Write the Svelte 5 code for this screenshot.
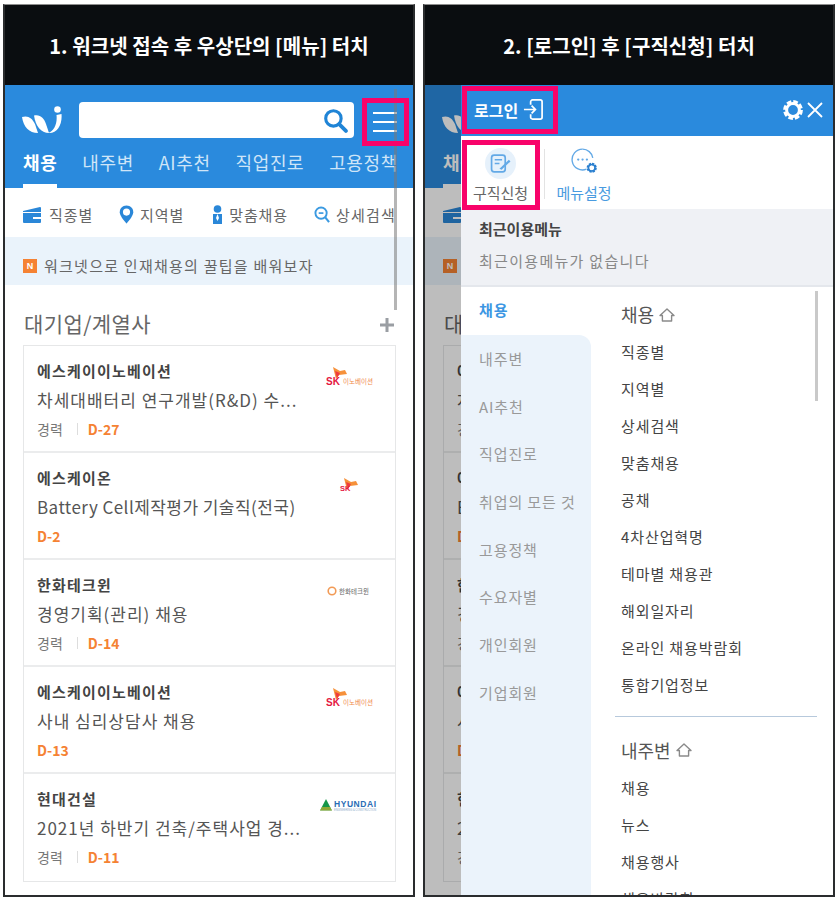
<script>
  const tabs = ['채용', '내주변', 'AI추천', '직업진로', '고용정책'];
  const jobs = [
    { co: '에스케이이노베이션', title: '차세대배터리 연구개발(R&D) 수...', career: true, d: 'D-27', logo: 'ski' },
    { co: '에스케이온', title: 'Battery Cell제작평가 기술직(전국)', career: false, d: 'D-2', logo: 'sk', tight: true },
    { co: '한화테크윈', title: '경영기획(관리) 채용', career: true, d: 'D-14', logo: 'hanwha' },
    { co: '에스케이이노베이션', title: '사내 심리상담사 채용', career: false, d: 'D-13', logo: 'ski' },
    { co: '현대건설', title: '2021년 하반기 건축/주택사업 경...', career: true, d: 'D-11', logo: 'hyundai' }
  ];
  const side = ['내주변', 'AI추천', '직업진로', '취업의 모든 것', '고용정책', '수요자별', '개인회원', '기업회원'];
  const menuA = ['직종별', '지역별', '상세검색', '맞춤채용', '공채', '4차산업혁명', '테마별 채용관', '해외일자리', '온라인 채용박람회', '통합기업정보'];
  const menuB = ['채용', '뉴스', '채용행사', '채용박람회'];
</script>

{#snippet wings(x, y)}
  <path d="M{x} {y} l7 4 l5 -1 l2 4 l-8 1 l-3 4 z" fill="#f6913a" />
  <path d="M{x + 2} {y + 4} l5 2 l-3 5 z" fill="#ee3b3f" />
{/snippet}

{#snippet home()}
  <svg class="home" viewBox="0 0 16 16" width="16" height="16" aria-hidden="true">
    <path d="M8 2 L15 8.5 H12.6 V14 H3.4 V8.5 H1 Z" fill="none" stroke="#8a8a8a" stroke-width="1.4" stroke-linejoin="round" />
  </svg>
{/snippet}

{#snippet page()}
  <div class="blue">
    <div class="top">
      <svg class="logo" viewBox="0 0 40 28" width="40" height="28" aria-hidden="true">
        <path d="M0 11 C6 9 10 12 13 18 L16 27 C7 27 1.5 21 0 11Z" fill="#fff" />
        <path d="M12 9.5 C18 8 22 12 24 18 L27 27 C19 27 13.5 20 12 9.5Z" fill="#fff" />
        <path d="M26 27 C32 25 35.5 18 34.5 9 L39.5 8 C40.5 19 35 28 26 27Z" fill="#fff" />
        <circle cx="35.5" cy="3.5" r="3.3" fill="#fff" />
      </svg>
      <div class="search">
        <svg viewBox="0 0 24 24" width="25" height="25" aria-hidden="true">
          <circle cx="10" cy="10" r="7.4" fill="none" stroke="#1f84d6" stroke-width="3" />
          <path d="M15.5 15.5 L22 22" stroke="#1f84d6" stroke-width="3.6" stroke-linecap="round" />
        </svg>
      </div>
      <div class="burger"><i></i><i></i><i></i></div>
    </div>
    <nav class="tabs">
      {#each tabs as t, i}
        <span class:on={i === 0}>{t}</span>
      {/each}
    </nav>
  </div>

  <div class="sub">
    <span class="it i1">
      <svg viewBox="0 0 20 18" width="20" height="18" aria-hidden="true">
        <path d="M1 5 L18 1 a1 1 0 0 1 1 1 V16 a1 1 0 0 1 -1 1 H2 a1 1 0 0 1 -1 -1Z" fill="#2a87d8" />
        <path d="M1 6.5 H19" stroke="#fff" stroke-width="1" />
        <rect x="11" y="11" width="8" height="2" fill="#fff" />
      </svg>직종별
    </span>
    <span class="it i2">
      <svg viewBox="0 0 16 20" width="15" height="19" aria-hidden="true">
        <path d="M8 0.5 C3.5 0.5 0.8 3.8 0.8 7.5 C0.8 12 8 19.5 8 19.5 S15.2 12 15.2 7.5 C15.2 3.8 12.5 0.5 8 0.5Z" fill="#2a87d8" />
        <circle cx="8" cy="7.4" r="3.8" fill="#fff" />
      </svg>지역별
    </span>
    <span class="it i3">
      <svg viewBox="0 0 11 19" width="11" height="19" aria-hidden="true">
        <circle cx="5.5" cy="4" r="3.8" fill="#2a87d8" />
        <path d="M1 9 H10 V19 H1Z" fill="#2a87d8" />
        <path d="M5.5 9 L7 13 L5.5 16 L4 13Z" fill="#fff" />
      </svg>맞춤채용
    </span>
    <span class="it i4">
      <svg viewBox="0 0 17 18" width="16" height="17" aria-hidden="true">
        <circle cx="7.5" cy="7.5" r="6" fill="none" stroke="#3b9ae1" stroke-width="2" />
        <path d="M5 7.5 H10" stroke="#3b9ae1" stroke-width="1.8" />
        <path d="M12 12 L16 17" stroke="#3b9ae1" stroke-width="2.2" />
      </svg>상세검색
    </span>
  </div>

  <div class="notice"><b>N</b>워크넷으로 인재채용의 꿀팁을 배워보자</div>

  <div class="sec">
    <h2>대기업/계열사</h2>
    <svg viewBox="0 0 14 14" width="14" height="14" aria-hidden="true"><path d="M7 0 V14 M0 7 H14" stroke="#9a9ea3" stroke-width="3" /></svg>
  </div>

  <ul class="jobs">
    {#each jobs as j}
      <li>
        <div class="job-text">
          <strong>{j.co}</strong>
          <p class:tight={j.tight}>{j.title}</p>
          <div class="meta">
            {#if j.career}<span class="car">경력</span>{/if}
            <em>{j.d}</em>
          </div>
        </div>
        <div class="co-logo">
          {#if j.logo === 'ski'}
            <svg viewBox="0 0 52 20" width="52" height="20" aria-hidden="true">
              {@render wings(10, 0)}
              <text x="3" y="18" class="sk">SK</text>
              <text x="20" y="17" class="ski">이노베이션</text>
            </svg>
          {:else if j.logo === 'sk'}
            <svg class="l-sk" viewBox="0 0 20 18" width="20" height="18" aria-hidden="true">
              {@render wings(5, 0)}
              <text x="1" y="13" class="sk small">SK</text>
            </svg>
          {:else if j.logo === 'hanwha'}
            <svg class="l-hw" viewBox="0 0 44 12" width="44" height="12" aria-hidden="true">
              <circle cx="5" cy="6" r="3.8" fill="none" stroke="#f29a55" stroke-width="1.6" />
              <text x="12" y="9" class="hw">한화테크윈</text>
            </svg>
          {:else}
            <svg class="l-hy" viewBox="0 0 58 14" width="58" height="14" aria-hidden="true">
              <path d="M0 12.5 L6 1 L12 12.5Z" fill="#16964a" />
              <path d="M0 12.5 L2 9 H10 L12 12.5Z" fill="#e3b62c" opacity=".6" />
              <text x="14" y="8.8" class="hy">HYUNDAI</text>
              <text x="14" y="12.6" class="hy2">ENGINEERING &amp; CONSTRUCTION</text>
            </svg>
          {/if}
        </div>
      </li>
    {/each}
  </ul>
{/snippet}

<main class="shot">
  <section class="panel">
    <header class="cap">1. 워크넷 접속 후 우상단의 [메뉴] 터치</header>
    <div class="body">
      {@render page()}
      <span class="scroll"></span>
      <span class="hl hl-menu"></span>
    </div>
  </section>

  <section class="panel">
    <header class="cap">2. [로그인] 후 [구직신청] 터치</header>
    <div class="body">
      {@render page()}
      <div class="dim"></div>
      <aside class="drawer">
        <div class="d-head">
          <div class="login">
            로그인
            <svg viewBox="0 0 22 22" width="21" height="21" aria-hidden="true">
              <path d="M8 6 V3 a2 2 0 0 1 2 -2 H18 a2 2 0 0 1 2 2 V19 a2 2 0 0 1 -2 2 H10 a2 2 0 0 1 -2 -2 V16" fill="none" stroke="#fff" stroke-width="1.8" />
              <path d="M1 11 H13 M9 7 L13 11 L9 15" fill="none" stroke="#fff" stroke-width="1.8" />
            </svg>
          </div>
          <div class="d-actions">
            <svg viewBox="0 0 20 20" width="20" height="20" aria-hidden="true">
              <circle cx="10" cy="10" r="8.4" fill="none" stroke="#fff" stroke-width="3" stroke-dasharray="4.6 2" />
              <circle cx="10" cy="10" r="6.4" fill="none" stroke="#fff" stroke-width="3" />
            </svg>
            <svg viewBox="0 0 16 16" width="16" height="16" aria-hidden="true"><path d="M1 1 L15 15 M15 1 L1 15" stroke="#fff" stroke-width="1.8" /></svg>
          </div>
        </div>

        <div class="quick">
          <div class="q q1">
            <span class="circle">
              <svg viewBox="0 0 20 20" width="21" height="21" aria-hidden="true">
                <rect x="1.5" y="2" width="13" height="16" rx="2.5" fill="none" stroke="#63a9e6" stroke-width="1.6" />
                <path d="M4.5 6.5 H11.5 M4.5 10 H9" stroke="#63a9e6" stroke-width="1.5" />
                <path d="M9 15 L18 6.5 L19.5 8 L11 16Z" fill="#63a9e6" />
              </svg>
            </span>
            <span class="q-l">구직신청</span>
          </div>
          <span class="q-div"></span>
          <div class="q q2">
            <svg viewBox="0 0 28 27" width="27" height="26" aria-hidden="true">
              <path d="M12 1.2 a10.8 10.8 0 1 0 4 20.8" fill="none" stroke="#63a9e6" stroke-width="1.4" />
              <path d="M12 1.2 a10.8 10.8 0 0 1 10.6 9" fill="none" stroke="#63a9e6" stroke-width="1.4" />
              <circle cx="7.5" cy="12" r="1.2" fill="#63a9e6" /><circle cx="12" cy="12" r="1.2" fill="#63a9e6" /><circle cx="16.5" cy="12" r="1.2" fill="#63a9e6" />
              <circle cx="21.5" cy="20.5" r="4" fill="none" stroke="#2a7fcf" stroke-width="2.6" stroke-dasharray="2.2 .9" />
              <circle cx="21.5" cy="20.5" r="3.4" fill="none" stroke="#2a7fcf" stroke-width="1.6" />
            </svg>
            <span class="q-l blue-l">메뉴설정</span>
          </div>
        </div>

        <div class="recent">
          <strong>최근이용메뉴</strong>
          <p>최근이용메뉴가 없습니다</p>
        </div>

        <div class="cols">
          <div class="left">
            <div class="active">채용</div>
            <div class="rest">
              {#each side as s}<div>{s}</div>{/each}
            </div>
          </div>
          <div class="right">
            <h3>채용 {@render home()}</h3>
            {#each menuA as m}<div class="m">{m}</div>{/each}
            <hr />
            <h3>내주변 {@render home()}</h3>
            {#each menuB as m}<div class="m">{m}</div>{/each}
          </div>
          <span class="scroll2"></span>
        </div>
      </aside>
      <span class="hl hl-login"></span>
      <span class="hl hl-apply"></span>
    </div>
  </section>
</main>

<style>
  :global(body) { margin: 0; background: #fff; }
  .shot {
    display: flex;
    gap: 8px;
    width: 838px;
    height: 901px;
    box-sizing: border-box;
    padding: 4px 0 0 3px;
    font-family: "Noto Sans CJK KR", "Noto Sans", sans-serif;
    color: #555;
  }
  .panel {
    width: 412px;
    height: 893px;
    box-sizing: border-box;
    border: 2px solid #2a2c2e;
    border-top: 1px solid #8d8d8d;
    display: flex;
    flex-direction: column;
    overflow: hidden;
    background: #fff;
  }
  .cap {
    flex: 0 0 80px;
    height: 80px;
    background: #0a0d10;
    color: #fff;
    font-size: 20px;
    font-weight: 700;
    display: flex;
    align-items: center;
    justify-content: center;
    box-sizing: border-box;
    letter-spacing: .05px;
    white-space: nowrap;
  }
  .body { position: relative; flex: 1; overflow: hidden; background: #fff; }

  .blue { background: #2a8add; height: 103px; box-sizing: border-box; padding: 17px 0 0 17px; }
  .top { display: flex; align-items: center; height: 36px; }
  .logo { flex: none; }
  .search {
    margin-left: 17px;
    width: 275px;
    height: 36px;
    background: #fff;
    border-radius: 4px;
    display: flex;
    align-items: center;
    justify-content: flex-end;
    padding-right: 6px;
    box-sizing: border-box;
  }
  .burger { margin: 3px 0 0 19px; width: 24px; display: flex; flex-direction: column; gap: 7px; }
  .burger i { display: block; height: 2px; background: #fff; }
  .tabs {
    display: flex;
    gap: 25px;
    margin: 9px 0 0 1px;
    font-size: 18px;
    letter-spacing: .6px;
    color: #cfe5f8;
    white-space: nowrap;
    height: 41px;
    line-height: 30px;
  }
  .tabs span { display: block; height: 41px; box-sizing: border-box; }
  .tabs .on { color: #fff; font-weight: 700; border-bottom: 4px solid #fff; }

  .sub { height: 49px; box-sizing: border-box; padding: 4px 0 0 17px; display: flex; align-items: center; font-size: 15px; letter-spacing: .9px; color: #666; white-space: nowrap; }
  .it { display: inline-flex; align-items: center; gap: 7px; }
  .i2 { margin-left: 26px; gap: 6px; }
  .i3 { margin-left: 28px; gap: 6px; }
  .i4 { margin-left: 26px; gap: 6px; letter-spacing: 1.2px; }

  .notice {
    height: 48px;
    box-sizing: border-box;
    background: #eaf3fb;
    display: flex;
    align-items: center;
    padding: 9px 0 0 18px;
    font-size: 15px;
    letter-spacing: 1.25px;
    color: #666;
    gap: 7px;
  }
  .notice b {
    width: 14px; height: 14px; background: #f58233; color: #fff;
    font: 700 9px/14px "Liberation Sans", sans-serif; text-align: center; letter-spacing: 0;
  }

  .sec { display: flex; justify-content: space-between; align-items: center; height: 60px; box-sizing: border-box; padding: 15px 19px 0 19px; }
  .sec svg { margin-top: 5px; }
  h2 { margin: 0; font-size: 21px; font-weight: 400; color: #666; letter-spacing: .4px; }

  .jobs { list-style: none; margin: 0 17px 0 18px; padding: 0; border: 1px solid #e6e7e8; }
  .jobs li { height: 107px; box-sizing: border-box; border-bottom: 2px solid #ebeced; display: flex; justify-content: space-between; padding: 12px 17px 0 13px; }
  .jobs li:last-child { border-bottom: 0; }
  .job-text strong { display: block; font-size: 15px; letter-spacing: 1.2px; font-weight: 700; color: #444; line-height: 26px; }
  .job-text p { margin: 2px 0 0; font-size: 17px; letter-spacing: 1px; line-height: 27px; color: #555; white-space: nowrap; }
  .job-text p.tight { letter-spacing: .45px; }
  .meta { display: flex; align-items: center; margin-top: 4px; font-size: 14px; line-height: 24px; height: 24px; }
  .car { color: #777; padding-right: 15px; margin-right: 10px; position: relative; }
  .car::after { content: ""; position: absolute; right: 0; top: 6px; height: 12px; width: 1px; background: #ddd; }
  .meta em { font-style: normal; font-weight: 700; color: #f58233; }
  .co-logo { width: 58px; display: flex; justify-content: center; padding-top: 9px; flex: none; }
  .co-logo svg { display: block; }
  .l-sk, .l-hw { margin-top: 4px; }
  .l-hy { margin-top: 3px; }
  .sk { font: 700 10px "Liberation Sans", sans-serif; fill: #e5173f; }
  .sk.small { font-size: 7.5px; }
  .ski { font: 400 6.5px "Noto Sans CJK KR", sans-serif; fill: #f08a4b; }
  .hw { font: 400 6.5px "Noto Sans CJK KR", sans-serif; fill: #666; }
  .hy { font: 700 8.5px "Liberation Sans", sans-serif; fill: #2a6db5; letter-spacing: .55px; }
  .hy2 { font: 400 2.6px "Liberation Sans", sans-serif; fill: #8aa9c9; }

  .scroll { position: absolute; left: 389px; top: 4px; width: 3px; height: 221px; background: rgba(120,120,120,.55); }
  .hl { position: absolute; box-sizing: border-box; border: 5px solid #f8036a; pointer-events: none; }
  .hl-menu { left: 357px; top: 13px; width: 47px; height: 48px; }
  .hl-login { left: 37px; top: 1px; width: 96px; height: 48px; }
  .hl-apply { left: 37px; top: 55px; width: 78px; height: 70px; }

  .dim { position: absolute; inset: 0; background: rgba(0,0,0,.26); }
  .drawer { position: absolute; left: 36px; right: 0; top: 0; bottom: 0; background: #fff; display: flex; flex-direction: column; overflow: hidden; }
  .d-head { flex: none; height: 51px; background: #2a8add; display: flex; align-items: center; justify-content: space-between; padding: 0 10px 2px 13px; box-sizing: border-box; color: #fff; }
  .login { display: flex; align-items: center; gap: 5px; font-size: 16px; font-weight: 700; }
  .d-actions { display: flex; align-items: center; gap: 4px; }

  .quick { flex: none; height: 73px; display: flex; align-items: flex-start; box-sizing: border-box; padding-top: 12px; }
  .q { display: flex; flex-direction: column; align-items: center; font-size: 15px; }
  .q1 { width: 79px; }
  .circle { width: 31px; height: 31px; border-radius: 50%; background: #e6f1fb; display: flex; align-items: center; justify-content: center; }
  .q-l { color: #666; margin-top: 4px; line-height: 20px; white-space: nowrap; }
  .q-div { width: 1px; height: 50px; background: #e3e3e3; margin: 1px 0 0 4px; }
  .q2 { margin-left: 11px; width: 56px; }
  .q2 svg { margin-top: 0; margin-bottom: 5px; }
  .blue-l { color: #4a9be0; }

  .recent { flex: none; height: 78px; background: #eff1f5; border-bottom: 2px solid #e4e7ec; box-sizing: border-box; padding: 9px 0 0 18px; }
  .recent strong { display: block; font-size: 15px; font-weight: 700; color: #444; line-height: 22px; }
  .recent p { margin: 10px 0 0; font-size: 15px; letter-spacing: 1.3px; color: #888; line-height: 22px; }

  .cols { flex: 1; display: flex; position: relative; min-height: 0; }
  .left { width: 130px; flex: none; display: flex; flex-direction: column; font-size: 15px; letter-spacing: .9px; color: #999; }
  .active { height: 48px; line-height: 46px; padding-left: 18px; color: #3d97e3; font-weight: 700; box-sizing: border-box; }
  .rest { flex: 1; background: #ebf3fb; border-top-right-radius: 12px; padding: 0 0 0 18px; }
  .rest div { height: 47.7px; line-height: 47.7px; white-space: nowrap; }
  .right { flex: 1; padding: 9px 0 0 30px; box-sizing: border-box; color: #444; min-width: 0; }
  h3 { margin: 0; font-size: 18px; font-weight: 400; color: #555; height: 37px; line-height: 37px; display: flex; align-items: center; gap: 5px; }
  .m { font-size: 15px; letter-spacing: .9px; height: 37px; line-height: 37px; color: #444; white-space: nowrap; }
  hr { border: 0; border-top: 1px solid #b7c9dc; margin: 13px 16px 14.5px -6px; }
  .scroll2 { position: absolute; left: 354px; top: 4px; width: 3px; height: 110px; background: #c9c9c9; }
</style>
